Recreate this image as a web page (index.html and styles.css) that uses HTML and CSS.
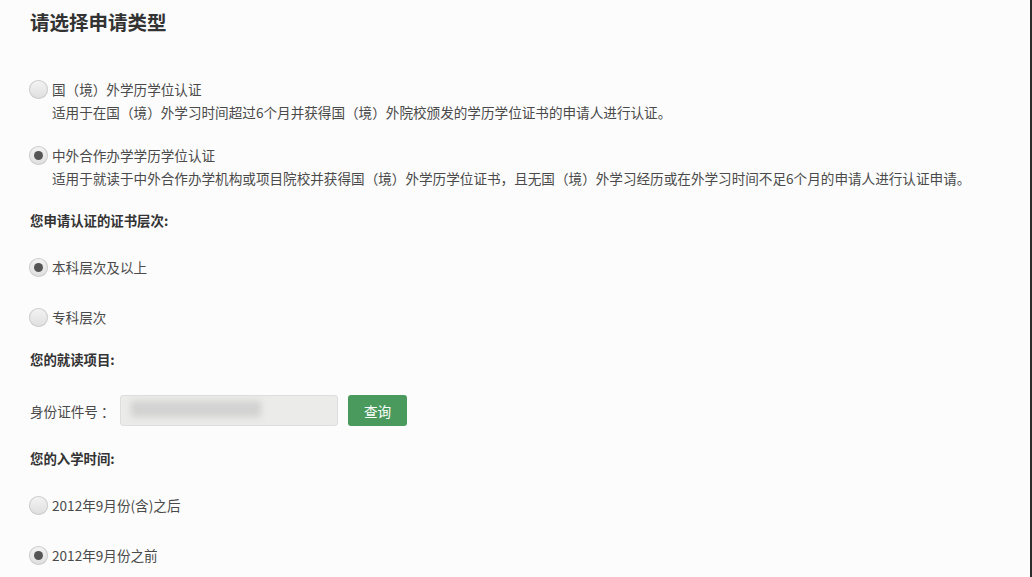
FILE: index.html
```html
<!DOCTYPE html>
<html lang="zh-CN">
<head>
    <meta charset="UTF-8">
    <meta name="viewport" content="width=device-width, initial-scale=1.0">
    <title>请选择申请类型</title>
    <link rel="stylesheet" href="styles.css">
</head>
<body>
    <div class="page">
        <h1 class="title">请选择申请类型</h1>

        <div class="type-list">
            <div class="type">
                <label class="option"><span class="radio"></span>国（境）外学历学位认证</label>
                <p class="desc">适用于在国（境）外学习时间超过6个月并获得国（境）外院校颁发的学历学位证书的申请人进行认证。</p>
            </div>
            <div class="type">
                <label class="option"><span class="radio checked"></span>中外合作办学学历学位认证</label>
                <p class="desc">适用于就读于中外合作办学机构或项目院校并获得国（境）外学历学位证书，且无国（境）外学习经历或在外学习时间不足6个月的申请人进行认证申请。</p>
            </div>
        </div>

        <h2 class="section">您申请认证的证书层次:</h2>
        <div class="choices">
            <label class="option"><span class="radio checked"></span>本科层次及以上</label>
            <label class="option"><span class="radio"></span>专科层次</label>
        </div>

        <h2 class="section">您的就读项目:</h2>
        <div class="id-row">
            <span class="id-label">身份证件号 ：</span>
            <div class="id-input"><span class="blur"></span></div>
            <button class="btn-search">查询</button>
        </div>

        <h2 class="section">您的入学时间:</h2>
        <div class="choices">
            <label class="option"><span class="radio"></span>2012年9月份(含)之后</label>
            <label class="option"><span class="radio checked"></span>2012年9月份之前</label>
        </div>
    </div>
</body>
</html>
```

FILE: styles.css
```css
* {
    margin: 0;
    padding: 0;
    box-sizing: border-box;
}

body {
    background-color: #fcfcfc;
    color: #4a4a4a;
    font-family: "Microsoft YaHei", "Noto Sans CJK SC", "Noto Sans", sans-serif;
    font-size: 13.6px;
}

.page {
    min-height: 100vh;
    padding: 10px 0 0 29px;
    border-right: 2px solid #2b2b2b;
}

.title {
    font-size: 19.5px;
    font-weight: bold;
    line-height: 24px;
    color: #333;
    padding-left: 1px;
}

.type-list {
    margin-top: 43px;
    display: flex;
    flex-direction: column;
    gap: 19px;
}

.option {
    display: flex;
    align-items: center;
    gap: 4px;
    line-height: 24px;
    height: 24px;
}

.radio {
    width: 19px;
    height: 19px;
    border-radius: 50%;
    background: linear-gradient(#f4f4f4, #dedede);
    box-shadow: inset 0 0 0 1px #cdcdcd;
    display: flex;
    align-items: center;
    justify-content: center;
}

.radio.checked::after {
    content: "";
    width: 9px;
    height: 9px;
    border-radius: 50%;
    background-color: #555;
}

.desc {
    padding-left: 23px;
    line-height: 23px;
    color: #4a4a4a;
}

.section {
    margin-top: 18px;
    padding-left: 1px;
    font-size: 13.4px;
    font-weight: bold;
    line-height: 24px;
    color: #333;
}

.choices {
    margin-top: 23px;
    display: flex;
    flex-direction: column;
    gap: 26px;
}

.id-row {
    margin-top: 24px;
    display: flex;
    align-items: center;
    height: 31px;
    margin-bottom: 20px;
}

.id-label {
    width: 91px;
    padding-left: 1px;
}

.id-input {
    width: 218px;
    height: 31px;
    background-color: #ebebe9;
    border: 1px solid #dedede;
    border-radius: 3px;
    padding: 5px 0 0 10px;
}

.blur {
    display: block;
    width: 130px;
    height: 16px;
    background-color: #d2d2d2;
    filter: blur(3px);
}

.btn-search {
    margin-left: 10px;
    width: 59px;
    height: 31px;
    border: none;
    border-radius: 3px;
    background-color: #4b9a5d;
    color: #fff;
    font-family: inherit;
    font-size: 13.6px;
}

.id-row + .section {
    margin-top: 0;
}
```
